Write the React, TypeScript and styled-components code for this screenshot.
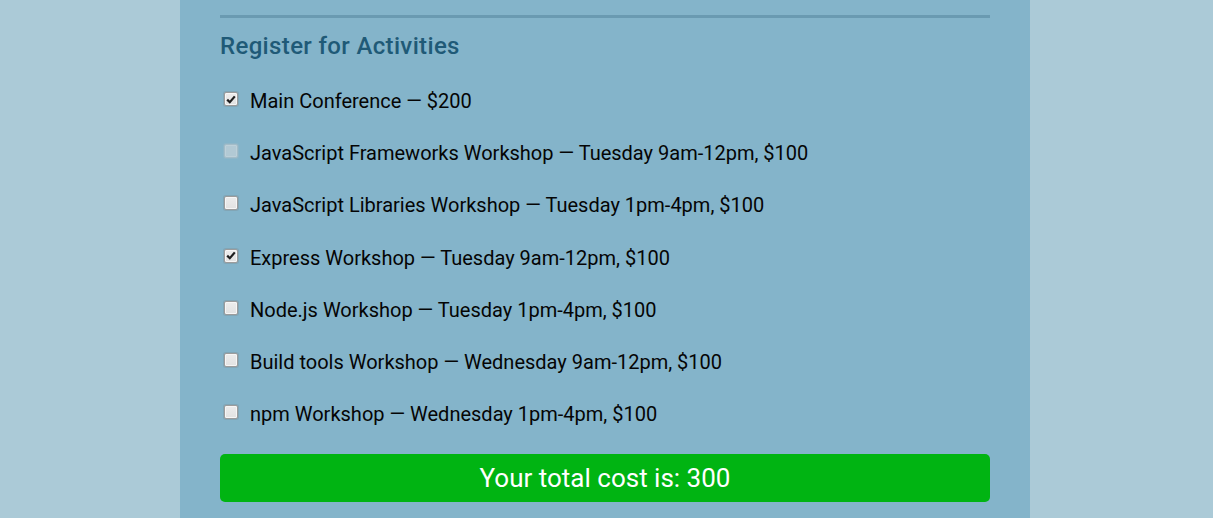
import React, { useState } from "react";
import styled, { createGlobalStyle } from "styled-components";

const Global = createGlobalStyle`
  html, body { margin: 0; padding: 0; background: #abcad7; }
  body { font-family: Roboto, "Noto Sans", sans-serif; }
`;

const Page = styled.div`
  width: 850px;
  margin: 0 auto 0 180px;
  background: #84b4ca;
  padding: 15px 40px 40px;
  box-sizing: border-box;
  min-height: 518px;
`;

const Rule = styled.hr`
  border: none;
  height: 3px;
  background: #6a9ab1;
  margin: 0;
`;

const Heading = styled.h2`
  margin: 13px 0 14px;
  font-size: 24px;
  font-weight: 500;
  letter-spacing: 0.35px;
  color: #1f5a77;
  line-height: 30px;
`;

const List = styled.div`
  display: flex;
  flex-direction: column;
`;

const Row = styled.label`
  display: flex;
  align-items: center;
  height: 52.17px;
  font-size: 20px;
  color: #050505;
  line-height: 24px;
`;

const HiddenInput = styled.input`
  position: absolute;
  opacity: 0;
  width: 0;
  height: 0;
  margin: 0;
`;

const Box = styled.span<{ $disabled?: boolean }>`
  width: 12px;
  height: 12px;
  margin: 0 12px 0 4px;
  border: 1px solid ${(p) => (p.$disabled ? "#a3bcc8" : "#9c9c9c")};
  border-radius: 2px;
  background: ${(p) =>
    p.$disabled ? "#b2c9d4" : "linear-gradient(#ececec, #e2e2e2)"};
  box-shadow: inset 0 0 0 1px ${(p) => (p.$disabled ? "#bdd0d9" : "#f6f6f6")},
    0 0 0 1px ${(p) => (p.$disabled ? "rgba(160,185,197,0.4)" : "rgba(120,120,120,0.25)")};
  display: flex;
  align-items: center;
  justify-content: center;
  flex-shrink: 0;
  position: relative;
  top: -2px;
`;

const Total = styled.div`
  margin-top: 14px;
  height: 48px;
  border-radius: 5px;
  background: #00b412;
  color: #fff;
  font-size: 26px;
  display: flex;
  align-items: center;
  justify-content: center;
`;

const items = [
  { name: "Main Conference — $200", cost: 200, checked: true },
  { name: "JavaScript Frameworks Workshop — Tuesday 9am-12pm, $100", cost: 100, disabled: true },
  { name: "JavaScript Libraries Workshop — Tuesday 1pm-4pm, $100", cost: 100 },
  { name: "Express Workshop — Tuesday 9am-12pm, $100", cost: 100, checked: true },
  { name: "Node.js Workshop — Tuesday 1pm-4pm, $100", cost: 100 },
  { name: "Build tools Workshop — Wednesday 9am-12pm, $100", cost: 100 },
  { name: "npm Workshop — Wednesday 1pm-4pm, $100", cost: 100 },
];

export default function App() {
  const [checked, setChecked] = useState(items.map((i) => !!i.checked));
  const total = items.reduce((s, it, idx) => s + (checked[idx] ? it.cost : 0), 0);
  return (
    <>
      <Global />
      <Page>
        <Rule />
        <Heading>Register for Activities</Heading>
        <List>
          {items.map((it, idx) => (
            <Row key={it.name}>
              <HiddenInput
                type="checkbox"
                checked={checked[idx]}
                disabled={it.disabled}
                onChange={() =>
                  setChecked((c) => c.map((v, j) => (j === idx ? !v : v)))
                }
              />
              <Box $disabled={it.disabled}>
                {checked[idx] && (
                  <svg width="10" height="9" viewBox="0 0 10 9">
                    <path d="M1.2 4.6 L3.8 7.2 L8.8 1.4" stroke="#1e1e1e" strokeWidth="2.2" fill="none" />
                  </svg>
                )}
              </Box>
              {it.name}
            </Row>
          ))}
        </List>
        <Total>Your total cost is: {total}</Total>
      </Page>
    </>
  );
}
